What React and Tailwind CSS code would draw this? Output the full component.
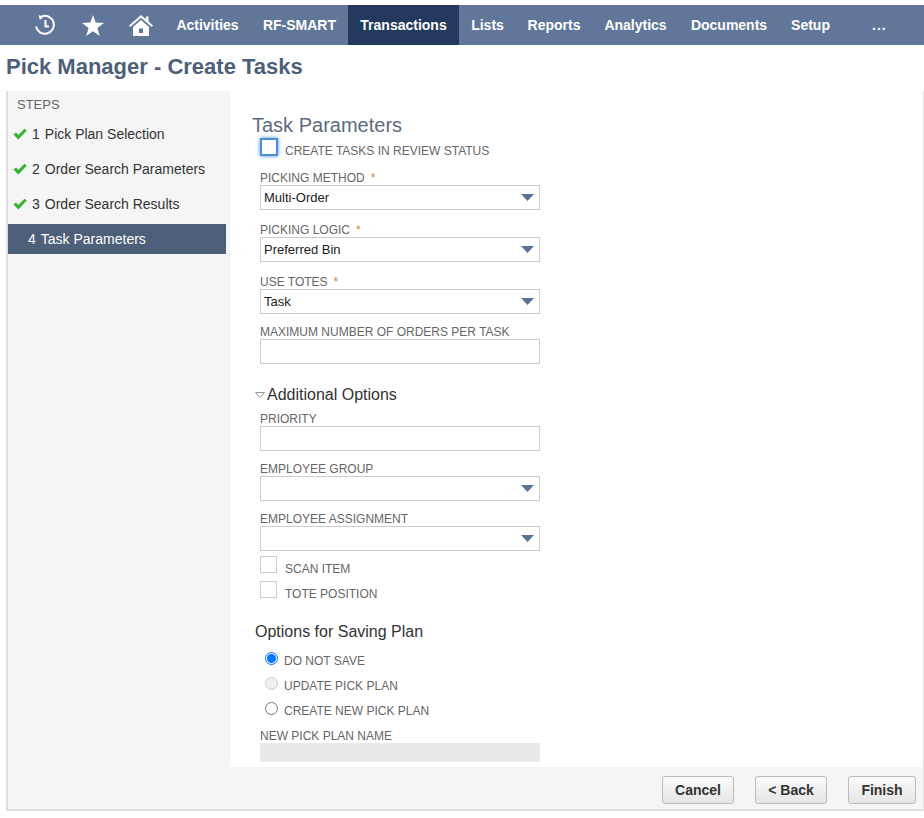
const navItems = [
  { label: 'Activities', width: 'w-[87px]' },
  { label: 'RF-SMART', width: 'w-[97px]' },
  { label: 'Transactions', width: 'w-[111px]', active: true },
  { label: 'Lists', width: 'w-[57px]' },
  { label: 'Reports', width: 'w-[76px]' },
  { label: 'Analytics', width: 'w-[87px]' },
  { label: 'Documents', width: 'w-[100px]' },
  { label: 'Setup', width: 'w-[63px]' },
];

const steps = [
  { num: '1', label: 'Pick Plan Selection', done: true },
  { num: '2', label: 'Order Search Parameters', done: true },
  { num: '3', label: 'Order Search Results', done: true },
  { num: '4', label: 'Task Parameters', active: true },
];

const buttons = [
  { label: 'Cancel', width: 'w-[72px]' },
  { label: '< Back', width: 'w-[72px]' },
  { label: 'Finish', width: 'w-[68px]' },
];

function HistoryIcon() {
  return (
    <svg width="22" height="22" viewBox="0 0 22 22" fill="none" stroke="white" strokeWidth="2">
      <path d="M8 2.2 A9 9 0 1 1 2 12.5" />
      <path d="M4.5 1.2 L10 2.2 L6 6 Z" fill="white" stroke="none" />
      <path d="M11.5 6 V12.5 H15" />
    </svg>
  );
}

function StarIcon() {
  return (
    <svg width="22" height="21" viewBox="0 0 22 21" fill="white">
      <path d="M11 0 L13.7 7.6 L22 7.9 L15.4 12.9 L17.8 21 L11 16.2 L4.2 21 L6.6 12.9 L0 7.9 L8.3 7.6 Z" />
    </svg>
  );
}

function HomeIcon() {
  return (
    <svg width="24" height="21" viewBox="0 0 24 21" fill="white">
      <path fillRule="evenodd" d="M4 12 L12 5 L20 12 V21 H4 Z M10 13.5 V18 H14 V13.5 Z" />
      <path d="M12 0 L17 4.3 V1.5 H19.5 V6.5 L24 10.5 L22.8 12 L12 2.8 L1.2 12 L0 10.5 Z" />
    </svg>
  );
}

function CheckIcon() {
  return (
    <svg width="14" height="12" viewBox="0 0 14 12" className="shrink-0">
      <path d="M0.5 6.5 L3 4.5 L5.3 7 L11.5 0.8 L13.8 2.6 L5.3 11.4 Z" fill="#2fb52f" />
    </svg>
  );
}

function Label({ text, required, className = '' }) {
  return (
    <div className={`h-4 pt-px text-xs leading-4 text-[#666] ${className}`}>
      {text}
      {required && <span className="ml-[6px] text-[#c78a2c]">*</span>}
    </div>
  );
}

function TextInput({ disabled }) {
  return disabled ? (
    <div className="h-[19px] w-[280px] bg-[#e9e9e9]" />
  ) : (
    <div className="h-[25px] w-[280px] border border-[#ccc] bg-white" />
  );
}

function SelectInput({ value }) {
  return (
    <div className="flex h-[25px] w-[280px] items-center justify-between border border-[#ccc] bg-white pl-[3px] pr-[5px] text-[13px] text-[#222]">
      <span>{value}</span>
      <svg width="13" height="7" viewBox="0 0 13 7" fill="#5b7396">
        <path d="M0 0 H13 L6.5 7 Z" />
      </svg>
    </div>
  );
}

function Checkbox({ label, className = '' }) {
  return (
    <div className={`flex h-[18px] w-[280px] ${className}`}>
      <div className="h-[17px] w-[17px] border border-[#ccc] bg-white" />
      <span className="ml-2 mt-[5px] text-xs leading-4 text-[#666]">{label}</span>
    </div>
  );
}

function Radio({ label, checked, disabled, className = '' }) {
  return (
    <div className={`flex h-[18px] items-center ${className}`}>
      {checked ? (
        <div className="flex h-[13px] w-[13px] -translate-y-px items-center justify-center rounded-full border border-[#0075ff] bg-white">
          <div className="h-[9px] w-[9px] rounded-full bg-[#0075ff]" />
        </div>
      ) : (
        <div className={`h-[13px] w-[13px] -translate-y-px rounded-full border ${disabled ? 'border-[#ccc] bg-[#f0f0f0]' : 'border-[#767676] bg-white'}`} />
      )}
      <span className="ml-[6px] mt-[3px] text-xs text-[#666]">{label}</span>
    </div>
  );
}

export default function App() {
  return (
    <div className="h-[818px] w-[924px] overflow-hidden bg-white pt-[5px] font-['Liberation_Sans',Arial,sans-serif]">
      <nav className="flex h-10 bg-[#607799] text-white">
        <div className="flex w-[164px] items-center">
          <div className="ml-[34px]"><HistoryIcon /></div>
          <div className="ml-[26px]"><StarIcon /></div>
          <div className="ml-[25px]"><HomeIcon /></div>
        </div>
        {navItems.map((item) => (
          <div
            key={item.label}
            className={`flex items-center justify-center text-sm font-bold ${item.width} ${item.active ? 'bg-[#233a5e]' : ''}`}
          >
            {item.label}
          </div>
        ))}
        <div className="ml-[30px] flex items-center text-sm font-bold tracking-[1px]">...</div>
      </nav>

      <h1 className="ml-[6px] mt-[8px] h-[38px] text-[22px] font-bold leading-[27px] text-[#4d5f79]">Pick Manager - Create Tasks</h1>

      <div className="ml-[6px] flex h-[720px] w-[918px] flex-col border-b-2 border-l-2 border-r border-[#e0e0e0]">
        <div className="flex h-[676px]">
          <aside className="w-[222px] bg-[#f5f5f5]">
            <div className="h-[28px] pl-[9px] pt-[6px] text-[13px] leading-4 text-[#666]">STEPS</div>
            {steps.map((step) => (
              <div
                key={step.num}
                className={`mb-[5px] flex h-[30px] w-[218px] items-center text-sm ${step.active ? 'bg-[#4d5f79] text-white' : 'text-[#333]'}`}
              >
                <div className={`ml-[5px] ${step.active ? 'w-[15px]' : 'w-[19px]'}`}>{step.done && <CheckIcon />}</div>
                <span className="mr-[5px]">{step.num}</span>
                <span>{step.label}</span>
              </div>
            ))}
          </aside>

          <main className="flex-1 bg-white pl-[22px] pt-[22px]">
            <h2 className="h-[26px] text-xl leading-6 text-[#5a6a80]">Task Parameters</h2>
            <div className="ml-2 flex h-[18px]">
              <div className="-mt-px h-[18px] w-[18px] border-2 border-[#4a90d9] bg-white shadow-[0_0_4px_#4a90d9]" />
              <span className="ml-[7px] mt-[4px] text-xs leading-4 text-[#666]">CREATE TASKS IN REVIEW STATUS</span>
            </div>

            <div className="ml-2">
              <Label text="PICKING METHOD" required className="mt-[12px]" />
              <SelectInput value="Multi-Order" />
              <Label text="PICKING LOGIC" required className="mt-[11px]" />
              <SelectInput value="Preferred Bin" />
              <Label text="USE TOTES" required className="mt-[11px]" />
              <SelectInput value="Task" />
              <Label text="MAXIMUM NUMBER OF ORDERS PER TASK" className="mt-[9px]" />
              <TextInput />
            </div>

            <div className="ml-[3px] mt-[22px] flex h-[18px] items-center text-base text-[#333]">
              <svg width="10" height="6" viewBox="0 0 10 6" fill="none" stroke="#999" className="mr-[2px]">
                <path d="M0.5 0.5 H9.5 L5 5.5 Z" />
              </svg>
              Additional Options
            </div>

            <div className="ml-2">
              <Label text="PRIORITY" className="mt-[6px]" />
              <TextInput />
              <Label text="EMPLOYEE GROUP" className="mt-[9px]" />
              <SelectInput value="" />
              <Label text="EMPLOYEE ASSIGNMENT" className="mt-[9px]" />
              <SelectInput value="" />
              <Checkbox label="SCAN ITEM" className="mt-[5px]" />
              <Checkbox label="TOTE POSITION" className="mt-[7px]" />
            </div>

            <div className="ml-[3px] mt-[23px] h-5 text-base leading-5 text-[#333]">Options for Saving Plan</div>

            <div className="ml-[13px] mt-[8px]">
              <Radio label="DO NOT SAVE" checked />
              <Radio label="UPDATE PICK PLAN" disabled className="mt-[7px]" />
              <Radio label="CREATE NEW PICK PLAN" className="mt-[7px]" />
            </div>

            <div className="ml-2">
              <Label text="NEW PICK PLAN NAME" className="mt-[10px] -mb-px -translate-y-px" />
              <TextInput disabled />
            </div>
          </main>
        </div>

        <footer className="flex h-[42px] items-start justify-end gap-[21px] bg-[#f5f5f5] pr-[7px] pt-[9px]">
          {buttons.map((button) => (
            <button
              key={button.label}
              type="button"
              className={`h-7 rounded-[3px] border border-[#bbb] bg-gradient-to-b from-[#fafafa] to-[#e5e5e5] text-sm font-bold text-[#333] ${button.width}`}
            >
              {button.label}
            </button>
          ))}
        </footer>
      </div>
    </div>
  );
}
